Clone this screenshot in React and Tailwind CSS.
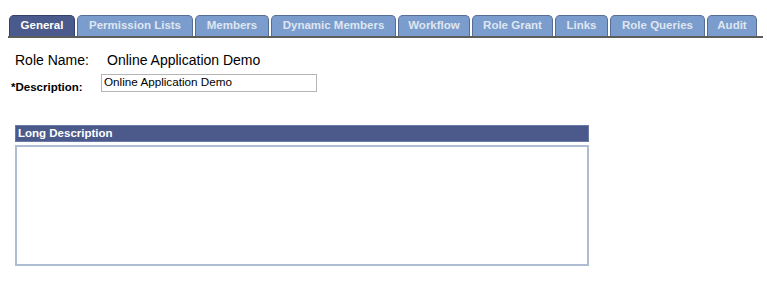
import React from 'react';

const TABS = [
  { label: 'General', w: 'w-[66px]', active: true },
  { label: 'Permission Lists', w: 'w-[116px]' },
  { label: 'Members', w: 'w-[74px]' },
  { label: 'Dynamic Members', w: 'w-[125px]' },
  { label: 'Workflow', w: 'w-[72px]' },
  { label: 'Role Grant', w: 'w-[81px]' },
  { label: 'Links', w: 'w-[53px]' },
  { label: 'Role Queries', w: 'w-[95px]' },
  { label: 'Audit', w: 'w-[50px]' },
];

function Tab({ label, w, active }) {
  return (
    <div
      className={
        `${w} h-[21px] flex items-center justify-center rounded-t-[5px] border border-b-0 whitespace-nowrap text-[11.5px] font-bold ` +
        (active
          ? 'bg-[#4a5a8c] border-[#34416a] text-white'
          : 'bg-[#7b9dcd] border-[#566d96] text-[#dfe6f1]')
      }
    >
      {label}
    </div>
  );
}

export default function App() {
  return (
    <div className="w-[767px] h-[283px] bg-white font-['Liberation_Sans',Arial,sans-serif] text-black overflow-hidden">
      {/* Tab strip */}
      <div className="pt-[15px] pl-[8px] pr-[4px]">
        <div className="flex gap-[2px] pl-[1px] border-b-2 border-[#5c5c5c]">
          {TABS.map(t => <Tab key={t.label} {...t} />)}
        </div>
      </div>

      {/* Role name */}
      <div className="flex mt-[14px] h-[16px] leading-[16px] text-[14px]">
        <div className="w-[107px] pl-[15px]">Role Name:</div>
        <div>Online Application Demo</div>
      </div>

      {/* Description */}
      <div className="flex items-start mt-[6px]">
        <div className="w-[101px] pl-[11px] mt-[6px] text-[11.5px] font-bold leading-[14px]">*Description:</div>
        <div className="w-[216px] h-[18px] border border-[#b5b5b5] px-[2px] text-[11.7px] leading-[14px]">
          Online Application Demo
        </div>
      </div>

      {/* Long description */}
      <div className="ml-[15px] w-[574px] mt-[31px]">
        <div className="h-[17px] bg-[#4b5a8b] border border-[#6a7aa6] text-white text-[11.5px] font-bold leading-[15px] pl-[2px]">
          Long Description
        </div>
        <div className="mt-[3px] h-[121px] border-2 border-[#aebdd1] bg-white" />
      </div>
    </div>
  );
}
